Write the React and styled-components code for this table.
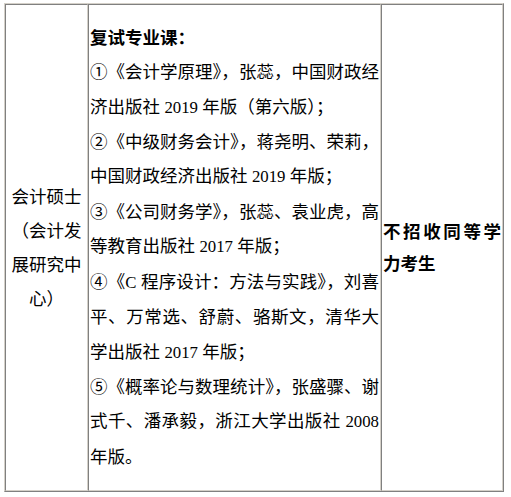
import styled, { createGlobalStyle } from "styled-components"

const GlobalStyle = createGlobalStyle`
    html, body {
        margin:0;
        padding:0;
        background:#ffffff;
    }
    body {
        font-family:"Liberation Serif", "Noto Sans CJK SC", serif;
        color:#000;
    }
`

const LIGHT = "#d4d0c8"
const DARK = "#808080"

const Page = styled.div`
    padding:3px 0 0 4px;
`

const Table = styled.div`
    display:grid;
    grid-template-columns:83px 293px 122px;
    width:498px;
    height:487px;
    border-style:solid;
    border-width:1px;
    border-color:${LIGHT} ${DARK} ${DARK} ${LIGHT};
`

const Cell = styled.div`
    box-sizing:border-box;
    display:flex;
    flex-direction:column;
    justify-content:center;
    padding:0 1px;
    border-style:solid;
    border-width:1px;
    border-color:${DARK} ${LIGHT} ${LIGHT} ${DARK};
    font-size:17.5px;
    line-height:${props => props.$lh}px;
    text-align:${props => props.$align || "left"};
    font-weight:${props => (props.$bold ? 700 : 400)};
`

const Line = styled.div`
    white-space:nowrap;
    text-align:left;
    text-align-last:${props => (props.$full ? "justify" : "left")};
    font-weight:${props => (props.$bold ? 700 : 400)};
`

const Justified = styled.div`
    text-align:justify;
`

const Num = styled.span`
    font-family:"Liberation Serif", serif;
    font-size:16.8px;
`

const lines = [
    { text: "复试专业课：", bold: true },
    { text: "①《会计学原理》，张蕊，中国财政经", full: true },
    { text: ["济出版社 ", "2019", " 年版（第六版）；"] },
    { text: "②《中级财务会计》，蒋尧明、荣莉，", full: true },
    { text: ["中国财政经济出版社 ", "2019", " 年版；"] },
    { text: "③《公司财务学》，张蕊、袁业虎，高", full: true },
    { text: ["等教育出版社 ", "2017", " 年版；"] },
    { text: ["④《", "C", " 程序设计：方法与实践》，刘喜"], full: true },
    { text: "平、万常选、舒蔚、骆斯文，清华大", full: true },
    { text: ["学出版社 ", "2017", " 年版；"] },
    { text: "⑤《概率论与数理统计》，张盛骤、谢", full: true },
    { text: ["式千、潘承毅，浙江大学出版社 ", "2008"], full: true },
    { text: "年版。" },
]

const renderText = text => {
    if (typeof text === "string") return text
    return text.map((part, i) => (i % 2 === 1 ? <Num key={i}>{part}</Num> : part))
}

const App = () => {
    return (
        <Page>
            <GlobalStyle />
            <Table>
                <Cell $lh={34} $align="center">
                    会计硕士（会计发展研究中心）
                </Cell>
                <Cell $lh={34.4}>
                    {lines.map((line, i) => (
                        <Line key={i} $full={line.full} $bold={line.bold}>
                            {renderText(line.text)}
                        </Line>
                    ))}
                </Cell>
                <Cell $lh={32} $bold>
                    <Justified>不招收同等学力考生</Justified>
                </Cell>
            </Table>
        </Page>
    )
}

export default App
